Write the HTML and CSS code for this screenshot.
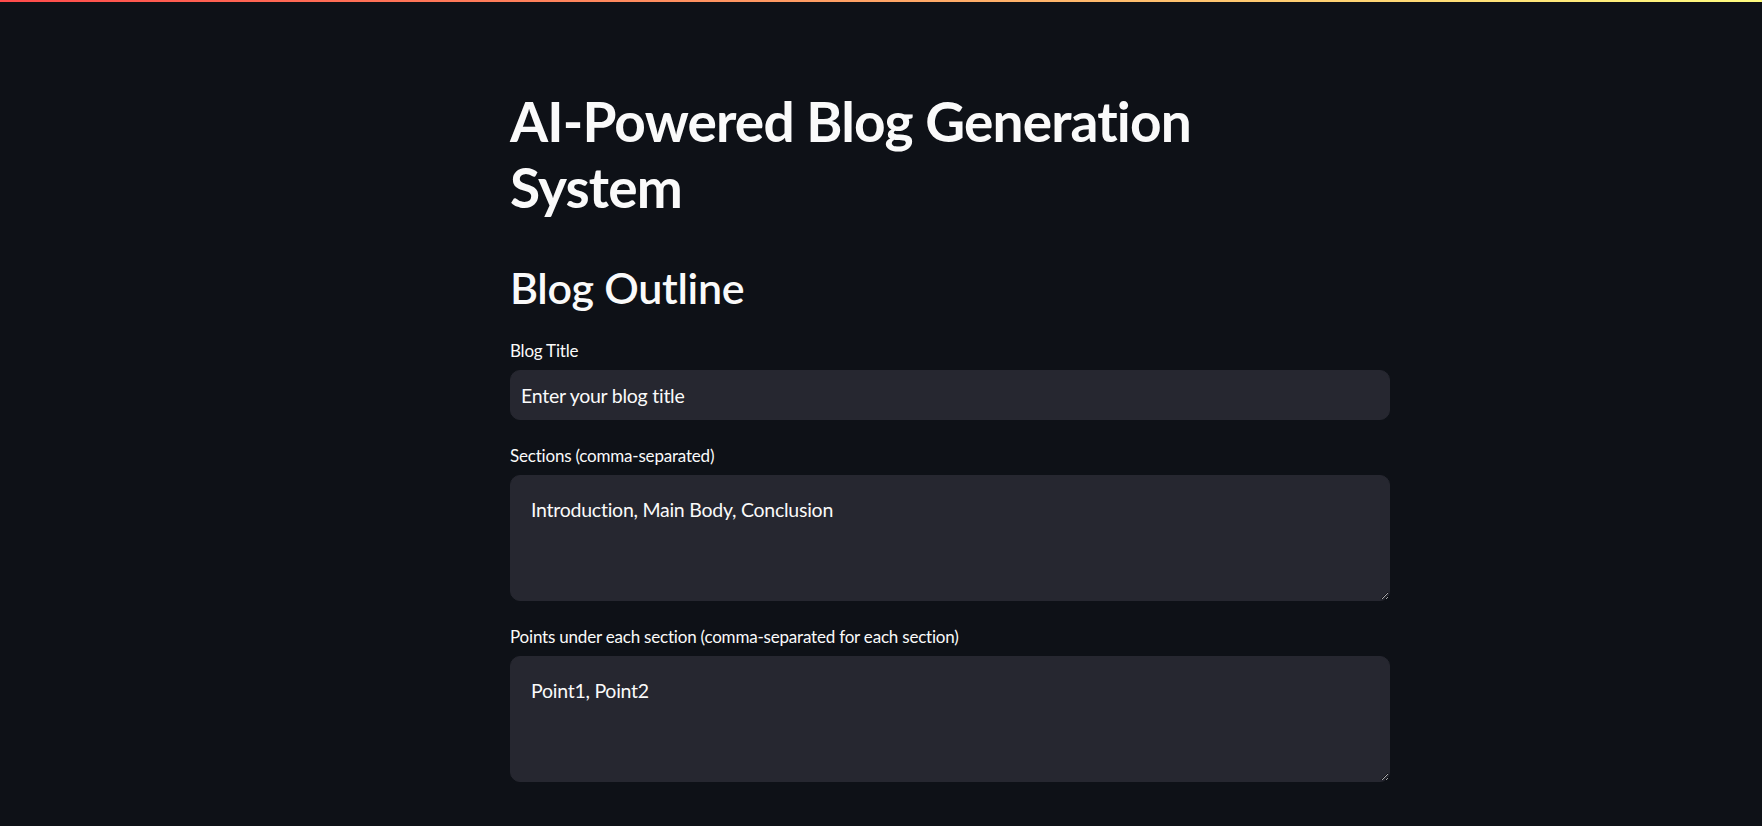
FILE: index.html
```html
<!DOCTYPE html>
<html lang="en">
<head>
<meta charset="utf-8">
<title>AI-Powered Blog Generation System</title>
<link rel="stylesheet" href="styles.css">
</head>
<body>
<div class="decoration"></div>
<main class="main">
  <h1 class="title">AI-Powered Blog Generation<br>System</h1>
  <h2 class="subtitle">Blog Outline</h2>
  <div class="field">
    <label class="label" for="title">Blog Title</label>
    <input class="text-input" id="title" type="text" value="Enter your blog title">
  </div>
  <div class="field">
    <label class="label" for="sections">Sections (comma-separated)</label>
    <textarea class="text-area" id="sections">Introduction, Main Body, Conclusion</textarea>
  </div>
  <div class="field">
    <label class="label" for="points">Points under each section (comma-separated for each section)</label>
    <textarea class="text-area" id="points">Point1, Point2</textarea>
  </div>
</main>
</body>
</html>
```
FILE: styles.css
```css
html, body {
  margin: 0;
  padding: 0;
  background: #0e1117;
  color: #fafafa;
  font-family: Lato, "Noto Sans", sans-serif;
  color-scheme: dark;
  overflow: hidden;
}
.decoration {
  height: 2px;
  background: linear-gradient(90deg, #ff4b4b, #fffd80);
}
.main {
  width: 880px;
  margin-left: 510px;
  padding-top: 86px;
  display: flex;
  flex-direction: column;
}
.title {
  margin: 0;
  font-size: 55px;
  line-height: 66px;
  font-weight: 700;
  letter-spacing: -0.85px;
}
.subtitle {
  margin: 41px 0 0 0;
  font-size: 43px;
  line-height: 54px;
  font-weight: 600;
  letter-spacing: -0.3px;
}
.field {
  display: flex;
  flex-direction: column;
  margin-top: 24px;
}
.label {
  font-size: 17px;
  line-height: 24px;
  margin-bottom: 7px;
  color: #fafafa;
  letter-spacing: -0.2px;
}
.text-input, .text-area {
  box-sizing: border-box;
  width: 100%;
  background: #262730;
  color: #fafafa;
  border: 1px solid #262730;
  border-radius: 10px;
  font-family: inherit;
  font-size: 19.5px;
  letter-spacing: -0.25px;
  outline: none;
  margin: 0;
}
.text-input {
  height: 50px;
  padding: 0 10px;
}
.text-area {
  height: 126px;
  padding: 20px 20px;
  line-height: 28px;
  resize: vertical;
}
```
